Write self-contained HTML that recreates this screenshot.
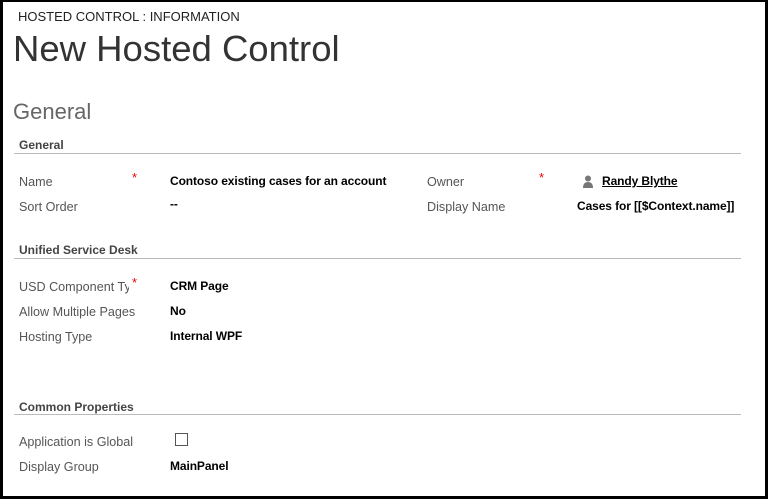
<!DOCTYPE html>
<html><head><style>
body{margin:0;width:768px;height:499px;overflow:hidden;background:#fff;font-family:"Liberation Sans",sans-serif;}
.frame{position:absolute;left:0;top:0;width:762px;height:494px;border:3px solid #000;border-top-width:2px;border-bottom-width:3px;}
.a{position:absolute;white-space:nowrap;}
.lbl{font-size:12.6px;color:#555;}
.val{font-size:12px;color:#000;font-weight:bold;letter-spacing:-0.1px;}
.star{color:#e00;font-size:13px;}
.sec{font-size:12px;font-weight:bold;color:#444;}
.line{position:absolute;left:14px;width:727px;height:1px;background:#bbb;}
</style></head><body>
<div class="frame"></div>
<div class="a" style="left:18px;top:9px;font-size:13px;color:#222">HOSTED CONTROL : INFORMATION</div>
<div class="a" style="left:13px;top:28px;font-size:36.5px;color:#333">New Hosted Control</div>
<div class="a" style="left:13px;top:99px;font-size:22px;color:#666">General</div>

<div class="a sec" style="left:19px;top:138px">General</div>
<div class="line" style="top:153px"></div>
<div class="a lbl" style="left:19px;top:175px">Name</div>
<div class="a star" style="left:132px;top:170px">*</div>
<div class="a val" style="left:170px;top:174px">Contoso existing cases for an account</div>
<div class="a lbl" style="left:19px;top:200px">Sort Order</div>
<div class="a val" style="left:170px;top:197px">--</div>
<div class="a lbl" style="left:427px;top:175px">Owner</div>
<div class="a star" style="left:539px;top:170px">*</div>
<svg class="a" style="left:582px;top:175px" width="12" height="13" viewBox="0 0 12 13"><circle cx="6" cy="3.5" r="3" fill="#777"/><path d="M1 13 Q1 7 6 7 Q11 7 11 13Z" fill="#777"/></svg>
<div class="a val" style="left:602px;top:174px;text-decoration:underline">Randy Blythe</div>
<div class="a lbl" style="left:427px;top:200px">Display Name</div>
<div class="a val" style="left:577px;top:199px">Cases for [[$Context.name]]</div>

<div class="a sec" style="left:19px;top:243px">Unified Service Desk</div>
<div class="line" style="top:258px"></div>
<div class="a lbl" style="left:19px;top:280px;width:110px;overflow:hidden">USD Component Type</div>
<div class="a star" style="left:132px;top:275px">*</div>
<div class="a val" style="left:170px;top:279px">CRM Page</div>
<div class="a lbl" style="left:19px;top:305px;width:116px;overflow:hidden">Allow Multiple Pages</div>
<div class="a val" style="left:170px;top:304px">No</div>
<div class="a lbl" style="left:19px;top:330px">Hosting Type</div>
<div class="a val" style="left:170px;top:329px">Internal WPF</div>

<div class="a sec" style="left:19px;top:400px">Common Properties</div>
<div class="line" style="top:414px"></div>
<div class="a lbl" style="left:19px;top:435px">Application is Global</div>
<div class="a" style="left:175px;top:433px;width:11px;height:11px;border:1px solid #555"></div>
<div class="a lbl" style="left:19px;top:460px">Display Group</div>
<div class="a val" style="left:170px;top:459px">MainPanel</div>
</body></html>
